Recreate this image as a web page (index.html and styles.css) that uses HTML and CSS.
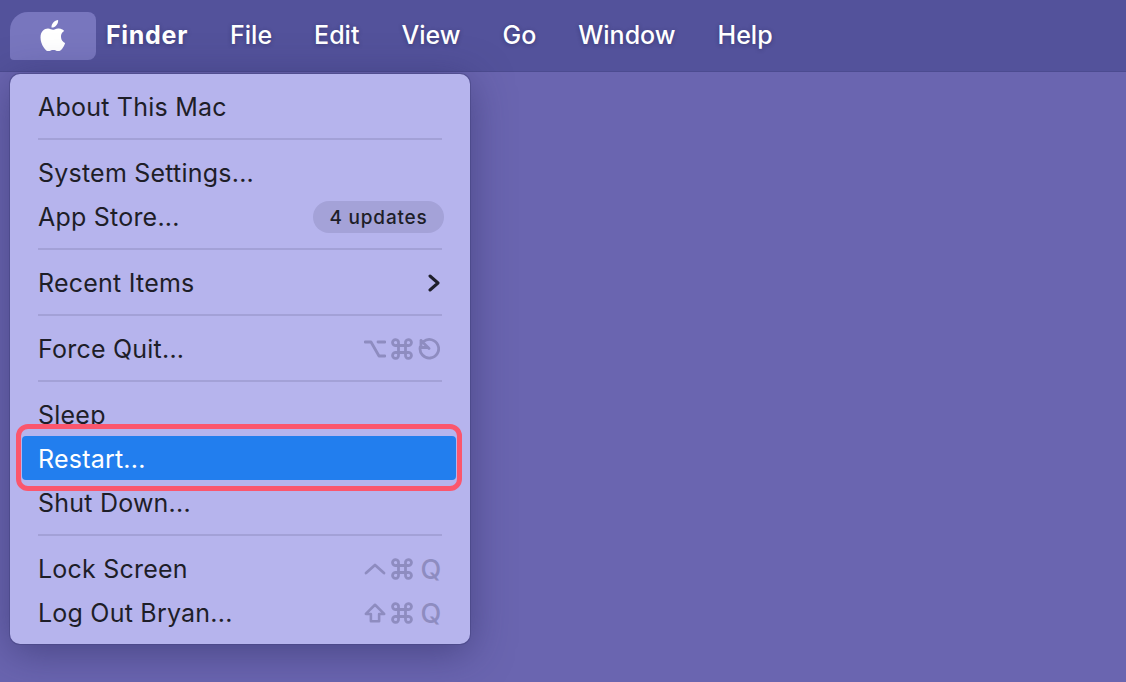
FILE: index.html
```html
<!DOCTYPE html>
<html lang="en">
<head>
<meta charset="utf-8">
<title>Apple menu</title>
<link rel="stylesheet" href="styles.css">
</head>
<body>
<header class="menubar">
  <div class="apple-btn">
    <svg class="apple" viewBox="0 0 28 32" aria-hidden="true"><path fill="#fff" d="M20.100 1c.2 2-.5 3.900-1.700 5.300-1.200 1.400-3 2.500-4.900 2.300-.2-1.900.7-3.900 1.800-5.100C16.500 2 18.500 1.100 20.100 1zM26.400 11.800c-.2.100-3.400 2-3.400 5.900 0 4.600 4 6.200 4.100 6.200 0 .1-.6 2.300-2.100 4.500-1.300 1.900-2.700 3.800-4.700 3.800s-2.600-1.200-5-1.200c-2.300 0-3.100 1.200-5 1.200s-3.200-1.700-4.700-3.900C3.900 25.800 2.500 22 2.500 18.400c0-5.800 3.800-8.900 7.500-8.900 2 0 3.600 1.300 4.900 1.300 1.200 0 3-1.400 5.300-1.400.9 0 4 .1 6 2.400z"/></svg>
  </div>
  <nav class="nav">
    <span class="nav-item nav-bold">Finder</span>
    <span class="nav-item">File</span>
    <span class="nav-item">Edit</span>
    <span class="nav-item">View</span>
    <span class="nav-item">Go</span>
    <span class="nav-item">Window</span>
    <span class="nav-item">Help</span>
  </nav>
</header>
<main class="desktop">
  <div class="menu">
    <div class="row"><span>About This Mac</span></div>
    <div class="sep"></div>
    <div class="row"><span>System Settings...</span></div>
    <div class="row"><span>App Store...</span><span class="badge">4 updates</span></div>
    <div class="sep"></div>
    <div class="row"><span>Recent Items</span>
      <svg class="chev" viewBox="0 0 12 18" aria-hidden="true"><path d="M2 2l8 7-8 7" fill="none" stroke="#1f1f2b" stroke-width="3" stroke-linecap="round" stroke-linejoin="round"/></svg>
    </div>
    <div class="sep"></div>
    <div class="row"><span>Force Quit...</span>
      <span class="keys">
        <svg class="key" viewBox="0 0 22 20" aria-hidden="true"><path d="M1 3h6l8 14h6M14 3h7" class="glyph"/></svg>
        <svg class="key" viewBox="0 0 22 22" aria-hidden="true"><path d="M7.500 7.500h7v7h-7zM7.500 7.500H5a3 3 0 1 1 2.500-2.500zM14.500 7.500V5a3 3 0 1 1 2.500 2.500zM14.500 14.500H17a3 3 0 1 1-2.500 2.500zM7.500 14.500V17A3 3 0 1 1 5 14.500z" class="glyph"/></svg>
        <svg class="key" viewBox="0 0 22 22" aria-hidden="true"><path d="M5.500 3.500A9.300 9.300 0 1 1 2.200 9M3 2.500v7h7M3 2.500l8 8" class="glyph"/></svg>
      </span>
    </div>
    <div class="sep"></div>
    <div class="row"><span>Sleep</span></div>
    <div class="row row-active"><span>Restart...</span></div>
    <div class="row"><span>Shut Down...</span></div>
    <div class="sep"></div>
    <div class="row"><span>Lock Screen</span>
      <span class="keys">
        <svg class="key" viewBox="0 0 22 14" aria-hidden="true"><path d="M2 11l9-8 9 8" class="glyph"/></svg>
        <svg class="key" viewBox="0 0 22 22" aria-hidden="true"><path d="M7.500 7.500h7v7h-7zM7.500 7.500H5a3 3 0 1 1 2.500-2.500zM14.500 7.500V5a3 3 0 1 1 2.500 2.500zM14.500 14.500H17a3 3 0 1 1-2.500 2.500zM7.500 14.500V17A3 3 0 1 1 5 14.500z" class="glyph"/></svg>
        <span class="key-q">Q</span>
      </span>
    </div>
    <div class="row"><span>Log Out Bryan...</span>
      <span class="keys">
        <svg class="key" viewBox="0 0 24 22" aria-hidden="true"><path d="M12 2L2 12h5.500v8h9v-8H22z" class="glyph"/></svg>
        <svg class="key" viewBox="0 0 22 22" aria-hidden="true"><path d="M7.500 7.500h7v7h-7zM7.500 7.500H5a3 3 0 1 1 2.500-2.500zM14.500 7.500V5a3 3 0 1 1 2.500 2.500zM14.500 14.500H17a3 3 0 1 1-2.500 2.500zM7.500 14.500V17A3 3 0 1 1 5 14.500z" class="glyph"/></svg>
        <span class="key-q">Q</span>
      </span>
    </div>
    <div class="callout"></div>
  </div>
</main>
</body>
</html>
```
FILE: styles.css
```css
* { box-sizing: border-box; }
html, body { margin: 0; height: 100%; }
body {
  width: 1126px;
  height: 682px;
  overflow: hidden;
  display: flex;
  flex-direction: column;
  background: #6a65b0;
  font-family: Inter, "Liberation Sans", sans-serif;
}
.menubar {
  height: 72px;
  flex: none;
  display: flex;
  align-items: center;
  padding: 0 0 0 10px;
  background: #53529b;
  box-shadow: inset 0 -1px 0 #4c4b90;
}
.apple-btn {
  width: 86px;
  height: 48px;
  margin-top: -1px;
  padding-right: 2px;
  display: flex;
  align-items: center;
  justify-content: center;
  border-radius: 18px 8px 8px 4px;
  background: #7876be;
}
.apple { width: 28px; height: 32px; margin-top: -1px; }
.nav { display: flex; margin-top: -2px; }
.nav-item {
  margin-left: 42px;
  color: #fff;
  font-size: 25px;
  font-weight: 500;
  line-height: 32px;
  text-shadow: 0 1px 4px rgba(30, 30, 80, 0.45);
}
.nav-bold { margin-left: 10px; font-weight: 700; letter-spacing: 0.7px; }
.desktop { flex: 1; padding: 2px 0 0 10px; }
.menu {
  position: relative;
  width: 460px;
  height: 570px;
  padding: 11px 28px 9px 28px;
  border-radius: 10px;
  background: #b6b4ed;
  box-shadow: 0 0 0 1px rgba(70, 68, 130, 0.55), 0 8px 40px rgba(40, 38, 90, 0.5);
  color: #1e1e28;
  font-size: 25px;
  letter-spacing: 0.22px;
}
.row {
  height: 44px;
  display: flex;
  align-items: center;
  justify-content: space-between;
}
.row-active {
  margin: -1px -14px 1px -16px;
  padding: 2px 14px 0 16px;
  border-radius: 4px;
  background: #227eee;
  color: #fff;
}
.sep {
  height: 2px;
  margin: 9px 0 11px;
  background: #a3a1d7;
}
.badge {
  width: 131px;
  height: 32px;
  margin-right: -2px;
  display: flex;
  align-items: center;
  justify-content: center;
  border-radius: 16px;
  background: #a4a2d8;
  font-size: 19px;
  font-weight: 500;
  letter-spacing: 0.8px;
}
.chev { width: 12px; height: 18px; margin-right: 2px; }
.keys { display: flex; align-items: center; gap: 5px; margin-right: 2px; }
.key { height: 22px; width: 22px; }
.glyph {
  fill: none;
  stroke: #8e8cc0;
  stroke-width: 2.800;
  stroke-linejoin: round;
  stroke-linecap: round;
}
.key-q {
  width: 22px;
  margin: 0 -2px 0 2px;
  color: #8e8cc0;
  font-size: 27px;
  font-weight: 500;
  letter-spacing: 0;
  text-align: center;
}
.callout {
  position: absolute;
  left: 6px;
  top: 350px;
  width: 446px;
  height: 67px;
  border: 5px solid #fb566d;
  border-radius: 12px;
}
```
